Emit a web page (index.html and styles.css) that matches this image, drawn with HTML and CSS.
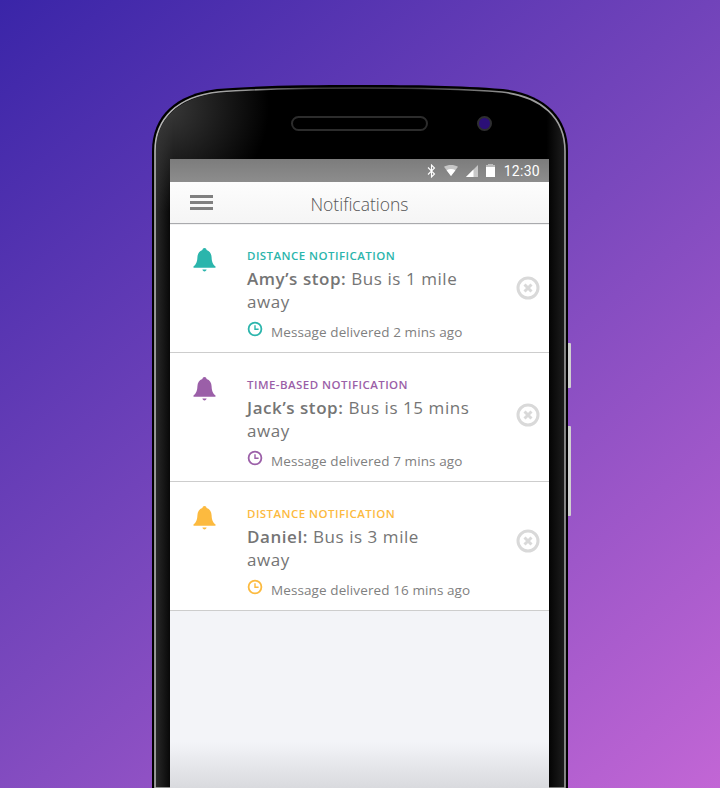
FILE: index.html
```html
<!DOCTYPE html>
<html lang="en">
<head>
    <meta charset="UTF-8">
    <meta name="viewport" content="width=device-width, initial-scale=1.0">
    <title>Notifications</title>
    <link rel="stylesheet" href="styles.css">
</head>
<body>
    <svg class="defs" width="0" height="0" aria-hidden="true">
        <symbol id="bell" viewBox="0 0 24 27">
            <path d="M12 0.500c1.200 0 2.100 0.900 2.200 2.100c3.400 1 5 4 5.200 7.600c0.200 3.900 0.700 6.900 4 9.500c0.600 0.500 0.300 1.300-0.500 1.300H1.100c-0.800 0-1.100-0.800-0.500-1.300c3.300-2.600 3.800-5.600 4-9.500c0.200-3.600 1.800-6.600 5.200-7.600c0.100-1.200 1-2.100 2.200-2.100z"/>
            <path d="M9.800 23h4.400c-0.200 1.100-1.100 1.900-2.200 1.900s-2-0.800-2.200-1.900z"/>
        </symbol>
        <symbol id="clock" viewBox="0 0 16 16">
            <circle cx="8" cy="8" r="6.400" fill="none" stroke="currentColor" stroke-width="1.800"/>
            <path d="M8 4.300v4h3.600" fill="none" stroke="currentColor" stroke-width="1.400"/>
        </symbol>
        <symbol id="dismiss" viewBox="0 0 24 24">
            <circle cx="12" cy="12" r="10" fill="none" stroke="#d9d9d9" stroke-width="3"/>
            <path d="M8.500 8.500l7 7M15.500 8.500l-7 7" fill="none" stroke="#d9d9d9" stroke-width="3"/>
        </symbol>
    </svg>

    <div class="phone">
        <svg class="shell" width="416" height="703" viewBox="0 0 416 703">
            <defs>
                <linearGradient id="side-left" x1="0" x2="1" y1="0" y2="0">
                    <stop offset="0" stop-color="#2a2a2a"/>
                    <stop offset="0.045" stop-color="#000"/>
                    <stop offset="0.955" stop-color="#000"/>
                    <stop offset="1" stop-color="#1e1e1e"/>
                </linearGradient>
                <radialGradient id="corner-glow" gradientUnits="userSpaceOnUse" cx="12" cy="22" r="105">
                    <stop offset="0" stop-color="#3a3a3a"/>
                    <stop offset="1" stop-color="#3a3a3a" stop-opacity="0"/>
                </radialGradient>
                <linearGradient id="edge" x1="0" x2="1" y1="0" y2="0">
                    <stop offset="0" stop-color="#b5b5b5"/>
                    <stop offset="0.2" stop-color="#a0a0a0"/>
                    <stop offset="0.4" stop-color="#3a3a3a"/>
                    <stop offset="0.62" stop-color="#3a3a3a"/>
                    <stop offset="0.88" stop-color="#9a9a9a"/>
                    <stop offset="1" stop-color="#a0a0a0"/>
                </linearGradient>
            </defs>
            <path d="M0 703V66C0 31 24 9 65 4C110 0.500 150 0 208 0C266 0 306 0.500 351 4C392 9 416 31 416 66V703z" fill="#000"/>
            <path d="M3 703V66C3 33 26 11.500 66 7C110 3.500 150 3 208 3C266 3 306 3.500 350 7C390 11.500 413 33 413 66V703z" fill="url(#side-left)" stroke="url(#edge)" stroke-width="1.600"/>
            <path d="M4 703V66C4 34 27 12.500 66 8C90 6 110 5 130 4.500V200H4z" fill="url(#corner-glow)"/>
        </svg>
        <div class="side-btn side-btn-power"></div>
        <div class="side-btn side-btn-volume"></div>
        <div class="bezel">
            <div class="speaker"></div>
            <div class="camera"></div>
        </div>
        <div class="screen">
            <div class="status-bar">
                <svg class="status-icon" width="9" height="14" viewBox="0 0 9 14"><path d="M1 3.500l6.500 6.500l-3 3v-12l3 3l-6.500 6.500" fill="none" stroke="#fff" stroke-width="1.100"/></svg>
                <svg class="status-icon" width="14" height="11" viewBox="0 0 14 11"><path d="M0 1.800c4-2.400 10-2.400 14 0l-7 9.200z" fill="#fff" fill-opacity=".55"/><path d="M2.600 5.200c2.700-1.500 6.100-1.500 8.800 0l-4.400 5.800z" fill="#fff"/></svg>
                <svg class="status-icon" width="12" height="12" viewBox="0 0 12 12"><path d="M12 0v12H0z" fill="#fff" fill-opacity=".55"/><path d="M7.500 4.500V12H0z" fill="#fff"/></svg>
                <svg class="status-icon status-battery" width="9" height="13" viewBox="0 0 9 13"><path d="M2.500 0h4v1h2.500v12H0V1h2.500z" fill="#fff"/><path d="M2.500 0h4v1h2.500v2H0V1h2.500z" fill="#bbb"/></svg>
                <span class="status-time">12:30</span>
            </div>
            <header class="app-bar">
                <div class="menu-icon"><span></span><span></span><span></span></div>
                <h1>Notifications</h1>
            </header>
            <main class="list">
                <article class="card card-teal">
                    <svg class="bell"><use href="#bell"/></svg>
                    <div class="card-body">
                        <div class="kind">DISTANCE NOTIFICATION</div>
                        <p class="message"><b>Amy’s stop:</b> Bus is 1 mile away</p>
                        <div class="meta"><svg class="clock"><use href="#clock"/></svg>Message delivered 2 mins ago</div>
                    </div>
                    <svg class="dismiss"><use href="#dismiss"/></svg>
                </article>
                <article class="card card-purple">
                    <svg class="bell"><use href="#bell"/></svg>
                    <div class="card-body">
                        <div class="kind">TIME-BASED NOTIFICATION</div>
                        <p class="message"><b>Jack’s stop:</b> Bus is 15 mins away</p>
                        <div class="meta"><svg class="clock"><use href="#clock"/></svg>Message delivered 7 mins ago</div>
                    </div>
                    <svg class="dismiss dismiss-up"><use href="#dismiss"/></svg>
                </article>
                <article class="card card-amber">
                    <svg class="bell"><use href="#bell"/></svg>
                    <div class="card-body">
                        <div class="kind">DISTANCE NOTIFICATION</div>
                        <p class="message"><b>Daniel:</b> Bus is 3 mile<br>away</p>
                        <div class="meta"><svg class="clock"><use href="#clock"/></svg>Message delivered 16 mins ago</div>
                    </div>
                    <svg class="dismiss dismiss-upper"><use href="#dismiss"/></svg>
                </article>
                <div class="fade"></div>
            </main>
        </div>
    </div>
</body>
</html>
```
FILE: styles.css
```css
* {
    box-sizing: border-box;
}
html, body {
    height: 788px;
}
body {
    margin: 0;
    overflow: hidden;
    padding-top: 85px;
    font-family: "Open Sans", sans-serif;
    background: linear-gradient(140deg, #3a25a8 0%, #7a48bd 50%, #c266d5 100%);
}
.defs {
    display: block;
    height: 0;
}
.phone {
    position: relative;
    width: 416px;
    height: 703px;
    margin-left: 152px;
    padding-left: 18px;
}
.shell {
    position: absolute;
    left: 0;
    top: 0;
    display: block;
}
.side-btn {
    position: absolute;
    left: 416px;
    width: 3px;
    background: #cfcfcf;
    border-radius: 0 1px 1px 0;
}
.side-btn-power {
    top: 258px;
    height: 45px;
}
.side-btn-volume {
    top: 341px;
    height: 90px;
}
.bezel {
    position: relative;
    height: 74px;
}
.speaker {
    position: absolute;
    left: 121px;
    top: 31px;
    width: 137px;
    height: 15px;
    border: 2.500px solid #2c2c2c;
    border-radius: 8px;
}
.camera {
    position: absolute;
    left: 307px;
    top: 31px;
    width: 15px;
    height: 15px;
    background: #2b0f78;
    border: 2.500px solid #2e2e30;
    border-radius: 50%;
}
.screen {
    position: relative;
    width: 379px;
    height: 629px;
    background: #f3f4f8;
    display: flex;
    flex-direction: column;
}
.status-bar {
    height: 23px;
    background: linear-gradient(180deg, #7c7c7c, #8d8d8d);
    display: flex;
    align-items: center;
    justify-content: flex-end;
    padding-right: 9px;
    gap: 8px;
    color: #fff;
}
.status-icon {
    display: block;
}
.status-time {
    font-family: Roboto, sans-serif;
    font-size: 14px;
    letter-spacing: 0.3px;
    margin-left: 1px;
}
.app-bar {
    position: relative;
    height: 41px;
    flex: none;
    background: linear-gradient(180deg, #fdfdfd, #f5f5f5);
    box-shadow: 0 1px 1px rgba(0, 0, 0, 0.3);
    z-index: 1;
    display: flex;
    align-items: center;
    justify-content: center;
}
.app-bar h1 {
    margin: 0;
    position: relative;
    top: 1.500px;
    font-size: 17.500px;
    font-weight: 300;
    color: #555;
}
.menu-icon {
    position: absolute;
    left: 20px;
    top: 13px;
    display: flex;
    flex-direction: column;
    gap: 3.500px;
}
.menu-icon span {
    display: block;
    width: 23px;
    height: 2.500px;
    background: #808080;
}
.list {
    position: relative;
    flex: 1;
    padding-top: 1px;
}
.card {
    height: 129px;
    background: #fff;
    border-bottom: 1px solid #cdcdcd;
    display: flex;
    align-items: center;
    padding: 0 9px 0 23px;
}
.card-teal {
    --accent: #2bb5ac;
}
.card-purple {
    --accent: #9b5fa8;
}
.card-amber {
    --accent: #fcba3f;
}
.bell {
    align-self: flex-start;
    width: 23px;
    height: 27px;
    margin-top: 23px;
    fill: var(--accent);
    flex: none;
}
.card-body {
    align-self: flex-start;
    width: 246px;
    margin-left: 31px;
    padding-top: 24px;
}
.kind {
    font-size: 11.500px;
    font-weight: 600;
    line-height: 15px;
    letter-spacing: 0.45px;
    color: var(--accent);
}
.message {
    margin: 4px 0 0;
    font-size: 17px;
    line-height: 23px;
    letter-spacing: 0.56px;
    color: #757575;
}
.message b {
    font-weight: 600;
}
.meta {
    display: flex;
    align-items: center;
    margin-top: 10px;
    font-size: 13.500px;
    line-height: 18px;
    letter-spacing: 0.1px;
    color: #808080;
    white-space: nowrap;
}
.clock {
    width: 16px;
    height: 16px;
    margin-right: 8px;
    position: relative;
    top: -3px;
    color: var(--accent);
    flex: none;
}
.dismiss {
    width: 24px;
    height: 24px;
    margin-left: auto;
    flex: none;
}
.dismiss-up {
    margin-bottom: 4px;
}
.dismiss-upper {
    margin-bottom: 10px;
}
.fade {
    position: absolute;
    left: 0;
    right: 0;
    bottom: 0;
    height: 46px;
    background: linear-gradient(180deg, rgba(218, 219, 223, 0), #d9dade);
}
```
